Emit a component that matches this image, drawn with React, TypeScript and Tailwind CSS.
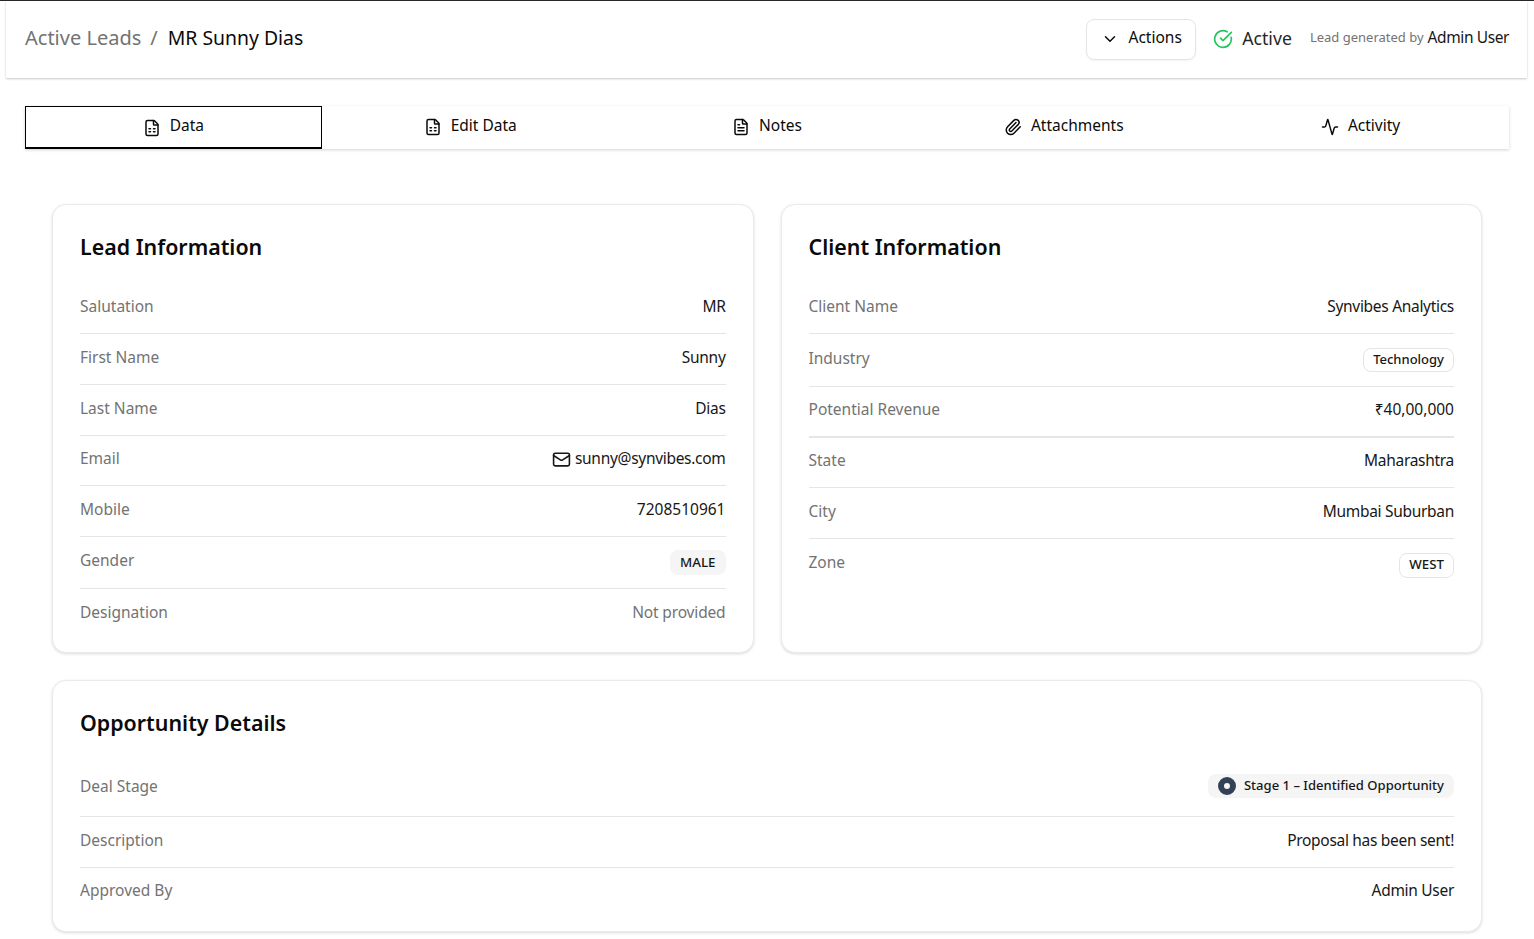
import React from 'react';
import {
  Activity,
  ChevronDown,
  CircleCheckBig,
  FileSpreadsheet,
  FileText,
  Mail,
  Paperclip,
} from 'lucide-react';

const tabs = [
  { label: 'Data', icon: FileSpreadsheet, active: true },
  { label: 'Edit Data', icon: FileSpreadsheet },
  { label: 'Notes', icon: FileText },
  { label: 'Attachments', icon: Paperclip },
  { label: 'Activity', icon: Activity },
];

type RowProps = {
  label: string;
  children: React.ReactNode;
  last?: boolean;
  h?: string;
  pb?: string;
  border?: string;
};

const Row = ({ label, children, last, h = 'h-[51px]', pb = 'pb-[2px]', border = 'border-b' }: RowProps) => (
  <div className={`flex items-center justify-between ${h} ${pb} ${last ? '' : `${border} border-[#e5e5e5]`}`}>
    <span className="text-[#737373] text-[15.5px]">{label}</span>
    <div className="text-[#171717] text-[15.5px] tracking-[-0.3px] flex items-center">{children}</div>
  </div>
);

const Card = ({ title, children, className = '', pb = 'pb-[20px]' }: { title: string; children: React.ReactNode; className?: string; pb?: string }) => (
  <div className={`bg-white rounded-[14px] border border-[#ebebeb] shadow-[0_1px_3px_rgba(0,0,0,0.14)] px-[27px] ${className}`}>
    <h2 className={`text-[21.4px] font-semibold text-[#0a0a0a] leading-8 pt-[26px] ${pb}`}>{title}</h2>
    {children}
  </div>
);

const App: React.FC = () => {
  return (
    <div className="min-h-[939px] bg-white border-t border-[#27272a] overflow-hidden font-['Noto_Sans',sans-serif]">
      <header className="ml-[6px] mr-[7px] h-[77px] px-[19px] bg-white shadow-[0_1px_2px_rgba(0,0,0,0.22)] flex items-center justify-between">
        <div className="flex items-center -mt-[3px]">
          <span className="text-[#737373] text-[20px]">Active Leads</span>
          <span className="text-[#737373] text-[20px] ml-[9px]">/</span>
          <span className="text-[#0a0a0a] text-[19.4px] ml-[10px]">MR Sunny Dias</span>
        </div>
        <div className="flex items-center -mt-[3px] -mr-[1px]">
          <button className="h-[41px] w-[110px] mt-[2px] pb-[3px] rounded-[8px] border border-[#e5e5e5] shadow-[0_1px_2px_rgba(0,0,0,0.05)] flex items-center justify-center gap-[10px] text-[15.5px] text-[#0a0a0a]">
            <ChevronDown size={18} className="mt-[3px]" />
            Actions
          </button>
          <CircleCheckBig size={20} strokeWidth={2} className="text-[#22c55e] ml-[17px] mt-[2px]" />
          <span className="ml-[9px] text-[17.7px] text-[#262626]">Active</span>
          <span className="ml-[18px] text-[13px] text-[#737373]">Lead generated by</span>
          <span className="ml-[4px] text-[15.5px] tracking-[-0.4px] text-[#171717] -mt-[1px]">Admin User</span>
        </div>
      </header>

      <nav className="mt-[28px] mx-[25px] h-[43px] grid grid-cols-5 bg-white shadow-[0_1px_3px_rgba(0,0,0,0.18)]">
        {tabs.map(({ label, icon: Icon, active }) => (
          <div
            key={label}
            className={`flex items-center justify-center gap-[9px] text-[15.5px] text-[#0a0a0a] ${active ? 'border border-b-2 border-black pb-[2px]' : 'pb-[4px]'}`}
          >
            <Icon size={18} strokeWidth={2} className="mt-[3px]" />
            {label}
          </div>
        ))}
      </nav>

      <main className="mt-[55px] mx-[52px]">
        <div className="grid grid-cols-2 gap-[27px]">
          <Card title="Lead Information" className="h-[449px]">
            <Row label="Salutation">MR</Row>
            <Row label="First Name">Sunny</Row>
            <Row label="Last Name">Dias</Row>
            <Row label="Email" h="h-[50px]" pb="pb-[4px]">
              <Mail size={19} strokeWidth={2} className="mr-[4px] mt-[2px]" />
              sunny@synvibes.com
            </Row>
            <Row label="Mobile"><span className="tracking-normal">7208510961</span></Row>
            <Row label="Gender" h="h-[52px]" pb="pb-[4px]">
              <span className="h-[25px] mt-[4px] px-[10px] rounded-[8px] bg-[#f5f5f5] text-[13.3px] tracking-normal font-medium flex items-center">MALE</span>
            </Row>
            <Row label="Designation" h="h-[47px]" pb="pb-0" last>
              <span className="text-[#737373] tracking-[-0.15px]">Not provided</span>
            </Row>
          </Card>
          <Card title="Client Information" className="h-[449px]">
            <Row label="Client Name">Synvibes Analytics</Row>
            <Row label="Industry" h="h-[53px]">
              <span className="h-[24px] mt-[2px] px-[9px] rounded-[8px] border border-[#e5e5e5] text-[13px] tracking-normal font-medium flex items-center">Technology</span>
            </Row>
            <Row label="Potential Revenue" pb="pb-[4px]" border="border-b-2">
              <span className="tracking-normal">₹40,00,000</span>
            </Row>
            <Row label="State" h="h-[50px]" pb="pb-[4px]">Maharashtra</Row>
            <Row label="City">Mumbai Suburban</Row>
            <Row label="Zone" h="h-[52px]" pb="pb-[4px]" last>
              <span className="h-[25px] mt-[4px] px-[9px] rounded-[8px] border border-[#e5e5e5] text-[13.3px] tracking-normal font-medium flex items-center">WEST</span>
            </Row>
          </Card>
        </div>

        <Card title="Opportunity Details" pb="pb-[19px]" className="mt-[27px] h-[252px]">
          <Row label="Deal Stage" h="h-[59px]" pb="pb-0">
            <span className="h-[24px] -mt-[2px] pl-[10px] pr-[10px] rounded-[8px] bg-[#f5f5f5] text-[13.05px] tracking-normal font-medium flex items-center gap-[8px]">
              <span className="w-[18px] h-[18px] rounded-full border-[6px] border-[#334155]" />
              Stage 1 – Identified Opportunity
            </span>
          </Row>
          <Row label="Description">Proposal has been sent!</Row>
          <Row label="Approved By" h="h-[46px]" pb="pb-0" last>Admin User</Row>
        </Card>
      </main>
    </div>
  );
};

export default App;
